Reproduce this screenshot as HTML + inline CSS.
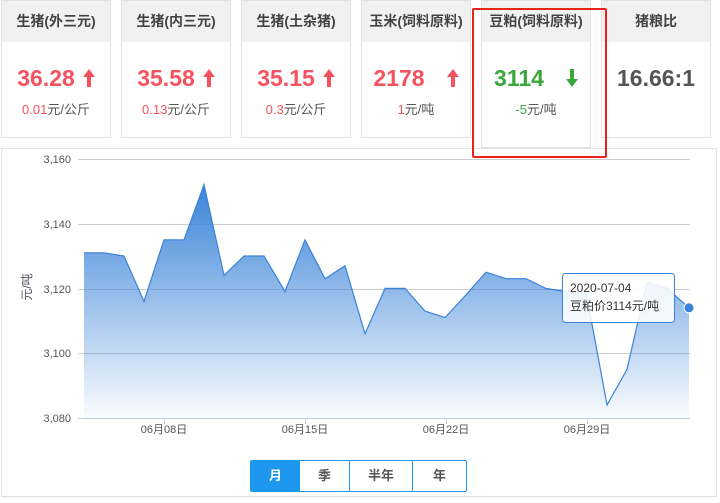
<!DOCTYPE html>
<html><head><meta charset="utf-8"><style>
body{margin:0;width:720px;height:503px;background:#fff;font-family:"Liberation Sans","Noto Sans CJK SC",sans-serif;position:relative;overflow:hidden}
.card{position:absolute;top:0;width:108px;height:136px;border:1px solid #e2e2e2;background:#fff}
.card .h{height:41px;background:#f1f1f1;text-align:center;line-height:41px;font-size:14px;font-weight:bold;color:#444}
.card .v{text-align:center;font-size:23px;font-weight:bold;margin-top:21px;height:30px;line-height:30px}
.card .s{text-align:center;font-size:13px;color:#555;margin-top:6px}
.red{color:#f4525f}.grn{color:#3aa73a}
.ar{display:inline-block;margin-left:8px;vertical-align:-1px}
</style></head><body>
<div class="card" style="left:1px"><div class="h">生猪(外三元)</div><div class="v red">36.28<svg class="ar" width="12" height="18" viewBox="0 0 12 18"><path d="M6 0 L12 8 L8 8 L8 18 L4 18 L4 8 L0 8Z" fill="#f4525f"/></svg></div><div class="s"><span class="red">0.01</span>元/公斤</div></div>
<div class="card" style="left:121px"><div class="h">生猪(内三元)</div><div class="v red">35.58<svg class="ar" width="12" height="18" viewBox="0 0 12 18"><path d="M6 0 L12 8 L8 8 L8 18 L4 18 L4 8 L0 8Z" fill="#f4525f"/></svg></div><div class="s"><span class="red">0.13</span>元/公斤</div></div>
<div class="card" style="left:241px"><div class="h">生猪(土杂猪)</div><div class="v red">35.15<svg class="ar" width="12" height="18" viewBox="0 0 12 18"><path d="M6 0 L12 8 L8 8 L8 18 L4 18 L4 8 L0 8Z" fill="#f4525f"/></svg></div><div class="s"><span class="red">0.3</span>元/公斤</div></div>
<div class="card" style="left:361px"><div class="h">玉米(饲料原料)</div><div class="v red">2178<svg class="ar" style="margin-left:22px" width="12" height="18" viewBox="0 0 12 18"><path d="M6 0 L12 8 L8 8 L8 18 L4 18 L4 8 L0 8Z" fill="#f4525f"/></svg></div><div class="s"><span class="red">1</span>元/吨</div></div>
<div class="card" style="left:481px;height:146px"><div class="h">豆粕(饲料原料)</div><div class="v grn">3114<svg class="ar" style="margin-left:22px" width="12" height="18" viewBox="0 0 12 18"><path d="M6 18 L12 10 L8 10 L8 0 L4 0 L4 10 L0 10Z" fill="#3aa73a"/></svg></div><div class="s"><span class="grn">-5</span>元/吨</div></div>
<div class="card" style="left:601px"><div class="h">猪粮比</div><div class="v" style="color:#555">16.66:1</div></div>
<div style="position:absolute;left:1px;top:148px;width:714px;height:347px;border:1px solid #e2e2e2;border-bottom-color:#ddd"></div>
<div style="position:absolute;left:472px;top:8px;width:131px;height:146px;border:2px solid #e8221c;border-radius:2px"></div>
<svg style="position:absolute;left:0;top:0" width="720" height="503">
<defs><linearGradient id="g" gradientUnits="userSpaceOnUse" x1="0" y1="184" x2="0" y2="418"><stop offset="0" stop-color="#3a83d8"/><stop offset="1" stop-color="#3a83d8" stop-opacity="0.03"/></linearGradient></defs>
<g stroke="#ccc" stroke-width="1"><line x1="78" y1="159.5" x2="690" y2="159.5"/><line x1="78" y1="224.5" x2="690" y2="224.5"/><line x1="78" y1="289.5" x2="690" y2="289.5"/><line x1="78" y1="353.5" x2="690" y2="353.5"/><line x1="78" y1="418.5" x2="690" y2="418.5" stroke="#c0d0e0"/>
<line x1="164.5" y1="418" x2="164.5" y2="424"/><line x1="305.5" y1="418" x2="305.5" y2="424"/><line x1="446.5" y1="418" x2="446.5" y2="424"/><line x1="587.5" y1="418" x2="587.5" y2="424"/></g>
<path d="M84,252.8 L104,252.8 124,256 144,301.4 164,239.8 184,239.8 204,184.7 224,275.4 244,256 264,256 285,291.6 305,239.8 325,278.7 345,265.7 365,333.8 385,288.4 405,288.4 425,311.1 445,317.6 466,294.9 486,272.2 506,278.7 526,278.7 546,288.4 566,291.6 586,291.6 607,405 627,369.4 647,282 667,288.4 689,307.8 L689,418 L84,418Z" fill="url(#g)"/>
<path d="M84,252.8 L104,252.8 124,256 144,301.4 164,239.8 184,239.8 204,184.7 224,275.4 244,256 264,256 285,291.6 305,239.8 325,278.7 345,265.7 365,333.8 385,288.4 405,288.4 425,311.1 445,317.6 466,294.9 486,272.2 506,278.7 526,278.7 546,288.4 566,291.6 586,291.6 607,405 627,369.4 647,282 667,288.4 689,307.8" fill="none" stroke="#3a83d8" stroke-width="1.2"/>
<circle cx="689" cy="307.8" r="5" fill="#3a83d8" stroke="#fff" stroke-width="1"/>
<g font-size="11" fill="#555" text-anchor="end" font-family="Liberation Sans,sans-serif"><text x="71" y="163">3,160</text><text x="71" y="228">3,140</text><text x="71" y="293">3,120</text><text x="71" y="357">3,100</text><text x="71" y="422">3,080</text></g>
<g font-size="11" fill="#555" text-anchor="middle" font-family="Liberation Sans,Noto Sans CJK SC,sans-serif"><text x="164" y="433">06月08日</text><text x="305" y="433">06月15日</text><text x="446" y="433">06月22日</text><text x="587" y="433">06月29日</text></g>
<text transform="translate(31,287) rotate(-90)" font-size="12" fill="#556" text-anchor="middle" font-family="Liberation Sans,Noto Sans CJK SC,sans-serif">元/吨</text>
<rect x="562.5" y="273.5" width="112" height="49" rx="3" fill="#fff" fill-opacity="0.88" stroke="#3a83d8"/>
<g font-size="12" fill="#333" font-family="Liberation Sans,Noto Sans CJK SC,sans-serif"><text x="570" y="292">2020-07-04</text><text x="570" y="310">豆粕价3114元/吨</text></g>
</svg>
<div style="position:absolute;left:250px;top:460px;width:215px;height:30px;border:1px solid #1e97ee;border-radius:2px;display:flex;font-size:13px;font-weight:bold;color:#555;line-height:30px;text-align:center">
<div style="width:49px;background:#1e97ee;color:#fff">月</div><div style="width:49px;border-right:1px solid #1e97ee">季</div><div style="width:62px;border-right:1px solid #1e97ee">半年</div><div style="flex:1">年</div></div>
</body></html>
